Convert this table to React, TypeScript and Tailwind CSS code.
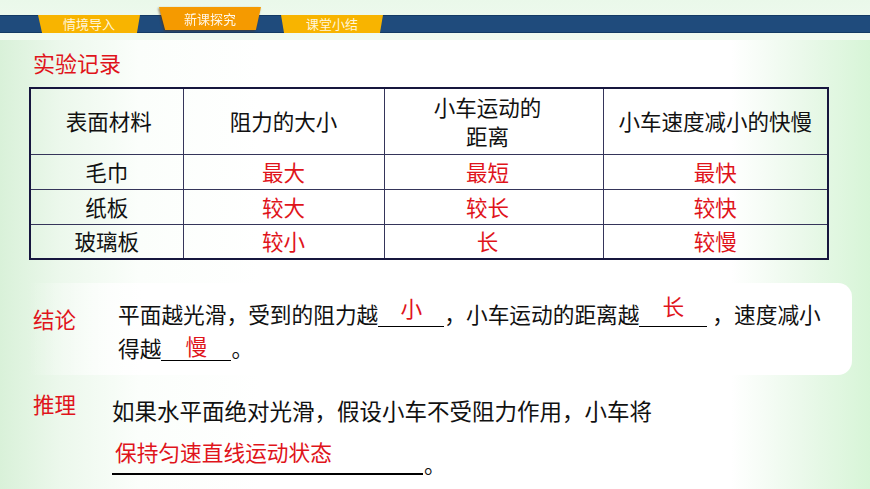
import React from 'react';

const RED = 'text-[#e0141b]';

const rows = [
    { m: '毛巾', f: '最大', d: '最短', s: '最快' },
    { m: '纸板', f: '较大', d: '较长', s: '较快' },
    { m: '玻璃板', f: '较小', d: '长', s: '较慢' },
];

const Blank: React.FC<{ answer: string; width: string; lift: string }> = ({ answer, width, lift }) => (
    <span className={`inline-block ${width} border-b border-black text-center leading-[24px] align-baseline`}>
        <span className={`relative ${lift} ${RED}`}>{answer}</span>
    </span>
);

const App: React.FC = () => {
    return (
        <div className="w-[870px] h-[489px] overflow-hidden font-['Noto_Sans_CJK_SC','Noto_Sans',sans-serif] text-[#111] bg-[linear-gradient(90deg,#d9f1d9_0%,#ecf8ec_7%,#fbfefb_16%,#ffffff_30%,#ffffff_84%,#ebf9eb_92%,#d7f5d7_100%)]">
            {/* Header with tabs */}
            <div className="h-[40px] pt-[15px] bg-[linear-gradient(180deg,#eaf8ea_0%,#f1faf1_100%)]">
                <div className="h-[18px] bg-[#1f4b7c] border-y border-[#143a64] flex items-start pl-[38px]">
                    <div className="w-[102px] h-[18px] -mt-px bg-[#f8b400] text-[#fff6dc] text-[13px] leading-[18px] text-center [clip-path:polygon(0_0,100%_0,97%_100%,4%_100%)]">
                        情境导入
                    </div>
                    <div className="ml-[19px] -mt-[9px] drop-shadow-[-1px_1px_1px_rgba(90,45,0,0.55)]">
                        <div className="w-[102px] h-[23px] bg-[#f59a00] text-[#fff6e6] text-[13px] leading-[23px] text-center [clip-path:polygon(0_0,100%_0,95%_100%,6%_100%)]">
                            新课探究
                        </div>
                    </div>
                    <div className="ml-[20px] w-[102px] h-[18px] -mt-px bg-[#f8b400] text-[#fff6dc] text-[13px] leading-[18px] text-center [clip-path:polygon(0_0,100%_0,97%_100%,3%_100%)]">
                        课堂小结
                    </div>
                </div>
            </div>

            <div className="pl-[29px]">
                {/* Title */}
                <div className={`mt-[11px] pl-[4px] text-[22px] leading-[22px] ${RED}`}>实验记录</div>

                {/* Table */}
                <table className="mt-[14px] w-[798px] table-fixed border-collapse border-2 border-[#16163e] text-[21.5px] text-center">
                    <colgroup>
                        <col className="w-[153px]" />
                        <col className="w-[201px]" />
                        <col className="w-[219px]" />
                        <col className="w-[225px]" />
                    </colgroup>
                    <thead>
                        <tr className="h-[66px]">
                            <th className="font-normal border border-[#35355a] pl-[4px]">表面材料</th>
                            <th className="font-normal border border-[#35355a]">阻力的大小</th>
                            <th className="font-normal border border-[#35355a] leading-[29px] pr-[12px]">
                                小车运动的<br />距离
                            </th>
                            <th className="font-normal border border-[#35355a]">小车速度减小的快慢</th>
                        </tr>
                    </thead>
                    <tbody>
                        {rows.map((r) => (
                            <tr key={r.m} className="h-[35px]">
                                <td className="border border-[#35355a] leading-[24px]">{r.m}</td>
                                <td className={`border border-[#35355a] leading-[24px] ${RED}`}>{r.f}</td>
                                <td className={`border border-[#35355a] leading-[24px] pr-[12px] ${RED}`}>{r.d}</td>
                                <td className={`border border-[#35355a] leading-[24px] ${RED}`}>{r.s}</td>
                            </tr>
                        ))}
                    </tbody>
                </table>

                {/* Conclusion */}
                <div className="mt-[23px] w-[823px] h-[92px] rounded-r-[14px] bg-[linear-gradient(90deg,rgba(255,255,255,0)_0%,rgba(255,255,255,0.6)_8%,#ffffff_14%,#ffffff_100%)] flex items-start pt-[14px] pl-[4px]">
                    <div className={`w-[85px] shrink-0 mt-[11px] text-[21.5px] leading-[22px] ${RED}`}>结论</div>
                    <div className="text-[21.7px] leading-[34px] whitespace-nowrap">
                        平面越光滑，受到的阻力越<Blank answer="小" width="w-[66px]" lift="-top-[6px]" />，小车运动的距离越<Blank answer="长" width="w-[68px]" lift="-top-[8px]" /> ，速度减小
                        <br />
                        得越<Blank answer="慢" width="w-[70px]" lift="-top-[2px]" />。
                    </div>
                </div>

                {/* Inference */}
                <div className="mt-[18px] flex items-start pl-[4px]">
                    <div className={`w-[79px] shrink-0 text-[21.5px] leading-[22px] ${RED}`}>推理</div>
                    <div className="text-[22.5px] whitespace-nowrap">
                        <div className="leading-[34px]">如果水平面绝对光滑，假设小车不受阻力作用，小车将</div>
                        <div className="mt-[13px] flex items-end">
                            <span className={`inline-block w-[311px] border-b-2 border-black pl-[3px] pb-[9px] text-[21.7px] leading-[24px] ${RED}`}>
                                保持匀速直线运动状态
                            </span>
                            <span className="text-[21.7px] leading-[24px] mb-[-1px] ml-[1px]">。</span>
                        </div>
                    </div>
                </div>
            </div>
        </div>
    );
};

export default App;
